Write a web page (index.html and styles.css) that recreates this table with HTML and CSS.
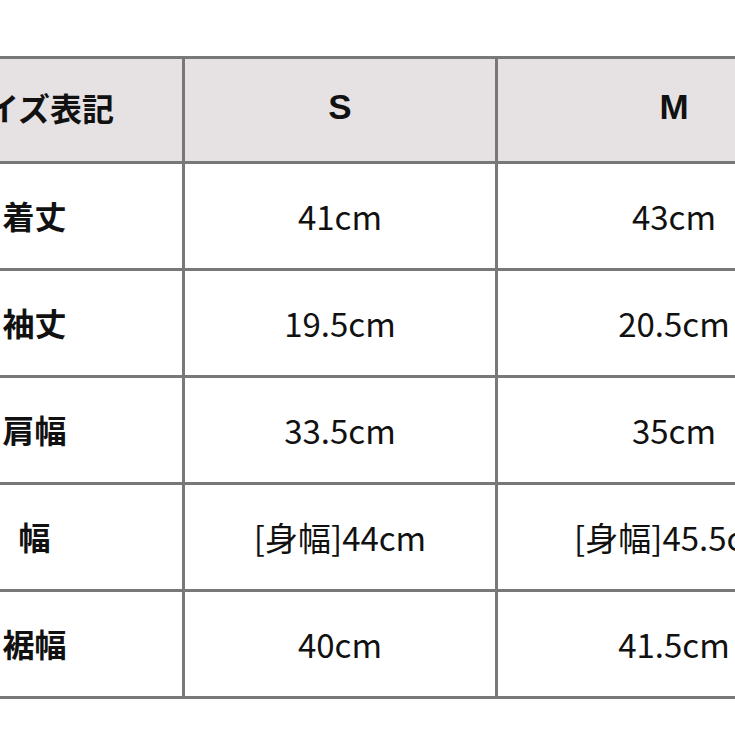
FILE: index.html
```html
<!DOCTYPE html>
<html lang="ja">
<head>
<meta charset="utf-8">
<link rel="stylesheet" href="styles.css">
</head>
<body>
<div class="page">
  <div class="table">
    <div class="cell head label">サイズ表記</div>
    <div class="cell head size">S</div>
    <div class="cell head size">M</div>

    <div class="cell label">着丈</div>
    <div class="cell val">41cm</div>
    <div class="cell val">43cm</div>

    <div class="cell label">袖丈</div>
    <div class="cell val">19.5cm</div>
    <div class="cell val">20.5cm</div>

    <div class="cell label">肩幅</div>
    <div class="cell val">33.5cm</div>
    <div class="cell val">35cm</div>

    <div class="cell label">幅</div>
    <div class="cell val">[身幅]44cm</div>
    <div class="cell val">[身幅]45.5cm</div>

    <div class="cell label">裾幅</div>
    <div class="cell val">40cm</div>
    <div class="cell val">41.5cm</div>
  </div>
</div>
</body>
</html>
```
FILE: styles.css
```css
html, body {
  margin: 0;
  padding: 0;
  background: #ffffff;
  overflow: hidden;
}
.page {
  width: 735px;
  height: 735px;
  overflow: hidden;
  padding-top: 56px;
  box-sizing: border-box;
}
.table {
  display: grid;
  grid-template-columns: 295px 310px 352px;
  grid-template-rows: 102px repeat(5, 104px);
  gap: 3px;
  padding: 3px;
  background: #787878;
  margin-left: -116px;
  width: max-content;
}
.cell {
  background: #ffffff;
  display: flex;
  align-items: center;
  justify-content: center;
  color: #111111;
  white-space: nowrap;
  padding-bottom: 3px;
}
.head {
  background: #e6e2e3;
  padding-bottom: 6px;
}
.label {
  font-family: "Noto Sans CJK JP", sans-serif;
  font-weight: 700;
  font-size: 32px;
}
.size {
  font-family: "Liberation Sans", Arial, sans-serif;
  font-weight: 700;
  font-size: 35px;
}
.val {
  font-family: "Noto Sans CJK JP", sans-serif;
  font-weight: 400;
  font-size: 33px;
  padding-bottom: 0;
}
```
